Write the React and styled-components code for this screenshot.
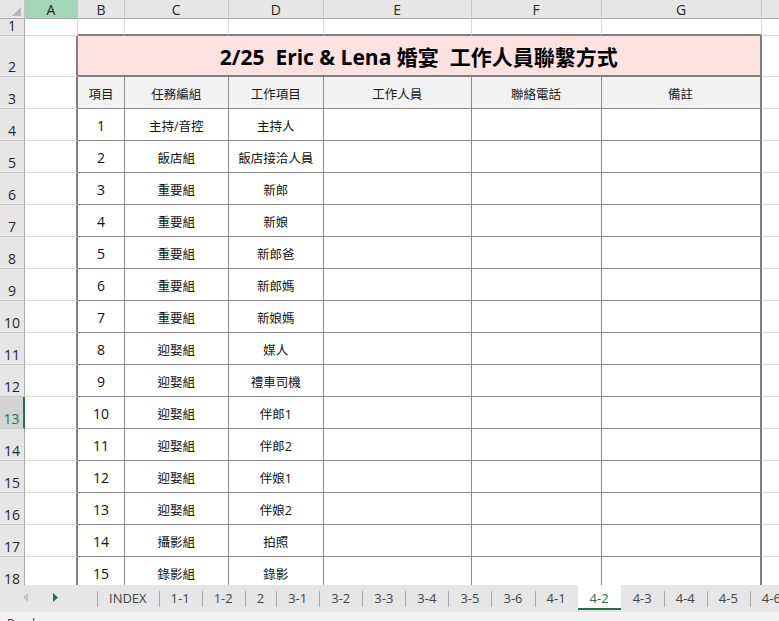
import React from "react";
import styled, { createGlobalStyle } from "styled-components";

const GlobalStyle = createGlobalStyle`
  html, body {
    margin: 0;
    padding: 0;
    background: #ffffff;
    overflow: hidden;
  }
  body {
    font-family: "Open Sans", "Noto Sans CJK TC", sans-serif;
  }
`;

const GRID = "#dadada";
const INNER = "1px solid #8c8c8c";
const EDGE = "2px solid #7f7f7f";
const GREEN = "#217346";

const Window = styled.div`
  width: 779px;
  height: 621px;
  display: flex;
  flex-direction: column;
  overflow: hidden;
`;

const Sheet = styled.div`
  flex: 0 0 585px;
  overflow: hidden;
  display: grid;
  grid-template-columns: 25px 53px 47px 103.5px 95.5px 147.5px 130px 160px 60px;
  grid-template-rows: 19px 17px 41px 32px repeat(15, 32px);
  color: #111;
`;

const Corner = styled.div`
  box-sizing: border-box;
  background: #e6e6e6;
  border-right: 1px solid #c6c6c6;
  border-bottom: 1px solid #ababab;
  display: flex;
  align-items: flex-end;
  justify-content: flex-end;
  padding: 0 3px 2px 0;
`;

const ColHead = styled.div`
  box-sizing: border-box;
  background: ${(p) => (p.$selected ? "#a3d7b5" : "#e6e6e6")};
  border-right: 1px solid #c8c8c8;
  border-bottom: 1px solid #ababab;
  font-size: 14px;
  color: #262626;
  display: flex;
  align-items: center;
  justify-content: center;
`;

const RowHead = styled.div`
  box-sizing: border-box;
  background: ${(p) => (p.$active ? "#d4d4d4" : "#e6e6e6")};
  border-right: ${(p) => (p.$active ? `2px solid ${GREEN}` : "1px solid #ababab")};
  border-bottom: 1px solid #c8c8c8;
  font-size: 14px;
  color: ${(p) => (p.$active ? GREEN : "#262626")};
  display: flex;
  align-items: flex-end;
  justify-content: center;
  line-height: 16px;
  padding-bottom: 1px;
`;

const Blank = styled.div`
  box-sizing: border-box;
  border-right: ${(p) => (p.$edgeRight ? EDGE : `1px solid ${GRID}`)};
  border-bottom: ${(p) => (p.$edgeBottom ? EDGE : `1px solid ${GRID}`)};
`;

const TitleCell = styled.div`
  box-sizing: border-box;
  grid-column: span 6;
  background: #fde2e2;
  border-right: ${EDGE};
  border-bottom: ${EDGE};
  display: flex;
  align-items: center;
  justify-content: center;
  font-size: 21px;
  font-weight: 700;
  white-space: pre;
  color: #000;
`;

const HeadCell = styled.div`
  box-sizing: border-box;
  background: #f2f2f2;
  border-right: ${(p) => (p.$last ? EDGE : INNER)};
  border-bottom: ${INNER};
  display: flex;
  align-items: center;
  justify-content: center;
  font-size: 12.5px;
  color: #1a1a1a;
  padding-top: 1px;
`;

const DataCell = styled.div`
  box-sizing: border-box;
  border-right: ${(p) => (p.$last ? EDGE : INNER)};
  border-bottom: ${INNER};
  display: flex;
  align-items: center;
  justify-content: center;
  font-size: ${(p) => (p.$num ? "14px" : "12.5px")};
  color: #111;
  padding-top: 2px;
`;

const TabBar = styled.div`
  flex: 0 0 27px;
  background: #e6e6e6;
  display: flex;
  align-items: flex-start;
  font-size: 13px;
  color: #444;
`;

const Nav = styled.div`
  flex: 0 0 97px;
  height: 25px;
  display: flex;
  align-items: center;
  padding-left: 23px;
  gap: 25px;
  box-sizing: border-box;
`;

const Tab = styled.div`
  flex: 0 0 auto;
  position: relative;
  height: 25px;
  box-sizing: border-box;
  padding: 0 12px;
  display: flex;
  align-items: center;
  white-space: nowrap;
  background: ${(p) => (p.$active ? "#ffffff" : "transparent")};
  color: ${(p) => (p.$active ? GREEN : "#444")};
  border-bottom: 2px solid ${(p) => (p.$active ? GREEN : "transparent")};
  padding-top: 2px;

  &::before {
    content: "";
    display: ${(p) => (p.$noSep ? "none" : "block")};
    position: absolute;
    left: 0;
    top: 6px;
    height: 16px;
    width: 1px;
    background: #a8a8a8;
  }
`;

const StatusBar = styled.div`
  flex: 1;
  background: #f3f3f3;
  font-size: 12px;
  color: #444;
  padding: 4px 0 0 7px;
  line-height: 16px;
`;

const rows = [
  ["1", "主持/音控", "主持人"],
  ["2", "飯店組", "飯店接洽人員"],
  ["3", "重要組", "新郎"],
  ["4", "重要組", "新娘"],
  ["5", "重要組", "新郎爸"],
  ["6", "重要組", "新郎媽"],
  ["7", "重要組", "新娘媽"],
  ["8", "迎娶組", "媒人"],
  ["9", "迎娶組", "禮車司機"],
  ["10", "迎娶組", "伴郎1"],
  ["11", "迎娶組", "伴郎2"],
  ["12", "迎娶組", "伴娘1"],
  ["13", "迎娶組", "伴娘2"],
  ["14", "攝影組", "拍照"],
  ["15", "錄影組", "錄影"],
];

const headers = ["項目", "任務編組", "工作項目", "工作人員", "聯絡電話", "備註"];
const letters = ["A", "B", "C", "D", "E", "F", "G", ""];
const tabs = ["INDEX", "1-1", "1-2", "2", "3-1", "3-2", "3-3", "3-4", "3-5", "3-6", "4-1", "4-2", "4-3", "4-4", "4-5", "4-6"];
const activeTab = "4-2";
const activeRow = 13;

function App() {
  const activeIndex = tabs.indexOf(activeTab);
  return (
    <Window>
      <GlobalStyle />
      <Sheet>
        <Corner>
          <svg width="9" height="9" viewBox="0 0 9 9">
            <polygon points="9,0 9,9 0,9" fill="#b8b8b8" />
          </svg>
        </Corner>
        {letters.map((l, i) => (
          <ColHead key={i} $selected={l === "A"}>
            {l}
          </ColHead>
        ))}

        <RowHead>1</RowHead>
        <Blank />
        {headers.map((h, i) => (
          <Blank key={i} $edgeBottom />
        ))}
        <Blank />

        <RowHead>2</RowHead>
        <Blank $edgeRight />
        <TitleCell>2/25  Eric &amp; Lena 婚宴  工作人員聯繫方式</TitleCell>
        <Blank />

        <RowHead>3</RowHead>
        <Blank $edgeRight />
        {headers.map((h, i) => (
          <HeadCell key={h} $last={i === headers.length - 1}>
            {h}
          </HeadCell>
        ))}
        <Blank />

        {rows.map((r, i) => {
          const n = i + 4;
          return (
            <React.Fragment key={n}>
              <RowHead $active={n === activeRow}>{n}</RowHead>
              <Blank $edgeRight />
              <DataCell $num>{r[0]}</DataCell>
              <DataCell>{r[1]}</DataCell>
              <DataCell>{r[2]}</DataCell>
              <DataCell />
              <DataCell />
              <DataCell $last />
              <Blank />
            </React.Fragment>
          );
        })}
      </Sheet>

      <TabBar>
        <Nav>
          <svg width="5" height="9" viewBox="0 0 5 9">
            <polygon points="5,0 5,9 0,4.5" fill="#c2c2c2" />
          </svg>
          <svg width="5" height="9" viewBox="0 0 5 9">
            <polygon points="0,0 0,9 5,4.5" fill={GREEN} />
          </svg>
        </Nav>
        {tabs.map((t, i) => (
          <Tab
            key={t}
            $active={t === activeTab}
            $noSep={i === activeIndex || i === activeIndex + 1}
          >
            {t}
          </Tab>
        ))}
      </TabBar>
      <StatusBar>Ready</StatusBar>
    </Window>
  );
}

export default App;
